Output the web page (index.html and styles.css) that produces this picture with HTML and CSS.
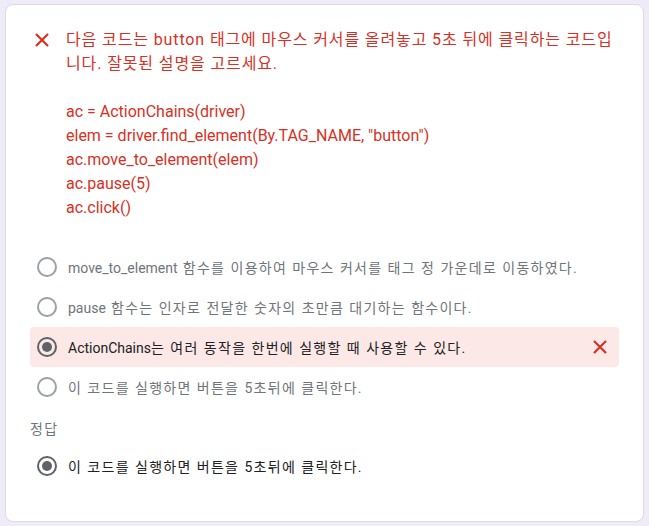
FILE: index.html
```html
<!DOCTYPE html>
<html lang="ko">
<head>
<meta charset="utf-8">
<link rel="stylesheet" href="styles.css">
</head>
<body>
<div class="card">
  <div class="question">
    <span class="q-icon">
      <svg width="14" height="14" viewBox="0 0 14 14"><path d="M1 1L13 13M13 1L1 13" stroke="#d93025" stroke-width="2.2" fill="none"/></svg>
    </span>
    <div class="q-text">
      <p class="q-line">다음 코드는 button 태그에 마우스 커서를 올려놓고 5초 뒤에 클릭하는 코드입니다. 잘못된 설명을 고르세요.</p>
      <div class="code">
        <div>ac = ActionChains(driver)</div>
        <div>elem = driver.find_element(By.TAG_NAME, "button")</div>
        <div>ac.move_to_element(elem)</div>
        <div>ac.pause(5)</div>
        <div>ac.click()</div>
      </div>
    </div>
  </div>
  <div class="options">
    <div class="option"><span class="radio"></span><span class="opt-text">move_to_element<span class="ko"> 함수를 이용하여 마우스 커서를 태그 정 가운데로 이동하였다.</span></span></div>
    <div class="option"><span class="radio"></span><span class="opt-text">pause<span class="ko"> 함수는 인자로 전달한 숫자의 초만큼 대기하는 함수이다.</span></span></div>
    <div class="option wrong"><span class="radio checked"></span><span class="opt-text">ActionChains<span class="ko">는 여러 동작을 한번에 실행할 때 사용할 수 있다.</span></span>
      <span class="x-icon"><svg width="14" height="14" viewBox="0 0 14 14"><path d="M1 1L13 13M13 1L1 13" stroke="#d93025" stroke-width="2.2" fill="none"/></svg></span>
    </div>
    <div class="option"><span class="radio"></span><span class="opt-text ko">이 코드를 실행하면 버튼을 5초뒤에 클릭한다.</span></div>
  </div>
  <div class="answer-label ko">정답</div>
  <div class="option answer"><span class="radio checked"></span><span class="opt-text ko">이 코드를 실행하면 버튼을 5초뒤에 클릭한다.</span></div>
</div>
</body>
</html>
```
FILE: styles.css
```css
* { box-sizing: border-box; }
html, body { margin: 0; padding: 0; }
body {
  background: #f0ebf8;
  font-family: Roboto, "Noto Sans CJK KR", sans-serif;
  padding: 4px 5px 4px 5px;
}
.card {
  background: #fff;
  border: 1px solid #dadce0;
  border-radius: 8px;
  padding: 23px 24px 34px 24px;
  height: 518px;
}
.ko {
  letter-spacing: 0.09em;
  word-spacing: 0.5px;
}
.question {
  display: flex;
  color: #d93025;
  font-size: 16px;
  line-height: 24px;
}
.q-icon {
  flex: 0 0 24px;
  height: 24px;
  margin-right: 12px;
  display: flex;
  align-items: center;
  justify-content: center;
}
.q-text { flex: 1; min-width: 0; }
.q-line {
  margin: 0;
  letter-spacing: 0.055em;
}
.code {
  margin-top: 24px;
}
.options {
  margin-top: 27px;
}
.option {
  display: flex;
  align-items: center;
  height: 40px;
  padding-left: 7px;
  padding-right: 7px;
  border-radius: 4px;
  font-size: 14px;
  color: #70757a;
}
.option.wrong {
  background: #fce8e6;
  color: #202124;
}
.radio {
  flex: 0 0 20px;
  width: 20px;
  height: 20px;
  border: 2px solid #9aa0a6;
  border-radius: 50%;
  margin-right: 11px;
  display: flex;
  align-items: center;
  justify-content: center;
}
.radio.checked { border-color: #5f6368; }
.radio.checked::after {
  content: "";
  width: 10px;
  height: 10px;
  border-radius: 50%;
  background: #5f6368;
}
.opt-text { flex: 1; }
.x-icon {
  width: 24px;
  height: 24px;
  display: flex;
  align-items: center;
  justify-content: center;
}
.answer-label {
  font-size: 14px;
  line-height: 20px;
  color: #70757a;
  margin-top: 12px;
}
.option.answer {
  margin-top: 7px;
  color: #202124;
}
```
